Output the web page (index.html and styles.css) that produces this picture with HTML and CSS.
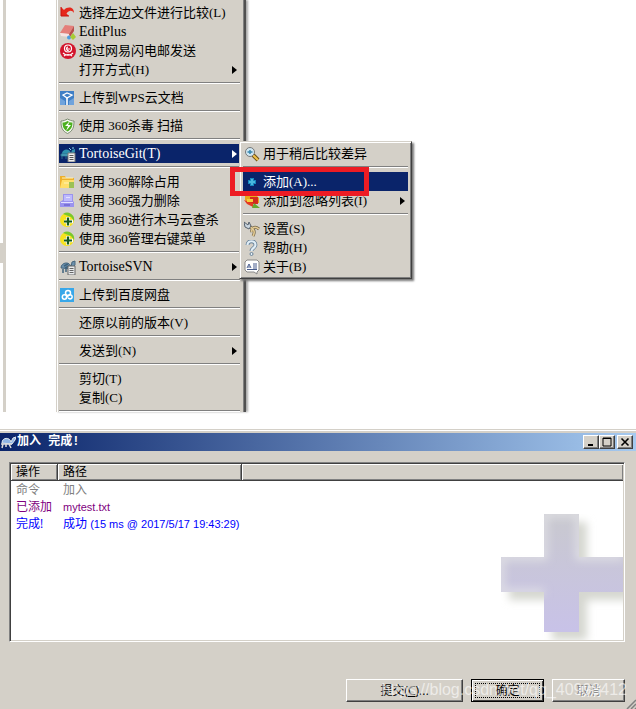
FILE: index.html
```html
<!DOCTYPE html>
<html lang="zh-CN">
<head>
    <meta charset="UTF-8">
    <meta name="viewport" content="width=device-width, initial-scale=1.0">
    <title>加入 完成!</title>
    <link rel="stylesheet" href="styles.css">
</head>

<body>
    <main class="desktop">
        <div class="splitter"><span class="thumb"></span></div>

        <ul class="menu">
            <li><button class="item">
                <svg class="icon" viewBox="0 0 16 16"><path d="M1 2v9h8L6.500 8.500C9 5 12 5 14 8c0-6-6-7-10-3z" fill="#e5281c"/><path d="M1 2v9h8" fill="none" stroke="#c5150f"/></svg>
                <span>选择左边文件进行比较(L)</span>
            </button></li>
            <li><button class="item">
                <svg class="icon" viewBox="0 0 16 16"><path d="M5 1l9 1-5 8-9-1z" fill="#e47f7a"/><path d="M0 9l9 1 1 3-9-1z" fill="#f6e4e4"/><path d="M9 10l5-8v5l-4 6z" fill="#b94d4b"/><circle cx="9" cy="13.500" r="2" fill="#4c9be0"/><path d="M13 9l3 4-3 3-3-3z" fill="#a8cc35"/></svg>
                <span class="latin">EditPlus</span>
            </button></li>
            <li><button class="item">
                <svg class="icon" viewBox="0 0 16 16"><circle cx="8" cy="8" r="8" fill="#d3152c"/><circle cx="8" cy="5.500" r="3.500" fill="none" stroke="#fff" stroke-width="1.200"/><path d="M6 6h4M8 4c-2 0-2 4 1 4M3 10c3 3 7 3 10 0M4 13c2-2 6-2 8 0" fill="none" stroke="#fff" stroke-width="1.200"/></svg>
                <span>通过网易闪电邮发送</span>
            </button></li>
            <li><button class="item has-sub">
                <span class="icon"></span>
                <span>打开方式(H)</span>
            </button></li>
            <li class="separator"></li>
            <li><button class="item">
                <svg class="icon" viewBox="0 0 16 16"><path d="M0 1h14v14H0z" fill="#3f7fc6"/><path d="M3 5l4-2 5 2-5 3z" fill="#3f7fc6" stroke="#fff" stroke-width="1.300"/><path d="M7 8v7" stroke="#fff" stroke-width="1.600"/><path d="M0 8l5 3v4H0zM9 11l5-3v7H9z" fill="#6fa3dc"/></svg>
                <span>上传到WPS云文档</span>
            </button></li>
            <li class="separator"></li>
            <li><button class="item">
                <svg class="icon" viewBox="0 0 16 16"><path d="M7.500 1c2 1 4 2 6.500 2 0 6-1 10-6.500 12.500C2 13 1 9 1 3c2.500 0 4.500-1 6.500-2z" fill="#f4f8f0" stroke="#7c8c72"/><path d="M7.500 3c2 1 3 1.500 5 1.500 0 4-1 7-5 9-4-2-5-5-5-9 2 0 3-.5 5-1.500z" fill="#4cb01f"/><path d="M10 3L5 8h3l-2 5 5-6H8z" fill="#fff"/></svg>
                <span>使用 360杀毒 扫描</span>
            </button></li>
            <li class="separator"></li>
            <li class="parent">
                <button class="item has-sub selected">
                    <svg class="icon" viewBox="0 0 16 16"><path d="M2 7c1-4 7-5 9 0l1-3 3-1v3l-3 2H2z" fill="#2e91ad"/><path d="M1 8h9v2H1zM2 10v3M6 10v3" fill="#5ac2d6" stroke="#2b6c8c"/><path d="M8 7h7v9H8z" fill="#eee" stroke="#777"/><path d="M9.500 9.500h4M9.500 11.500h4M9.500 13.500h4" stroke="#555"/><path d="M9 2l2 2M13 1v2" stroke="#87d9ef"/></svg>
                    <span class="latin">TortoiseGit(T)</span>
                </button>

                <ul class="menu submenu">
                    <li><button class="item">
                        <svg class="icon" viewBox="0 0 16 16"><path d="M9 9l5 5" stroke="#6b4d12" stroke-width="4"/><path d="M9 9l5 5" stroke="#efc24b" stroke-width="2"/><circle cx="6" cy="6" r="4.500" fill="#cfe7f3" stroke="#777"/><path d="M3.500 6h5M6 4v4" stroke="#3785ad" stroke-width="1.500"/></svg>
                        <span>用于稍后比较差异</span>
                    </button></li>
                    <li class="separator"></li>
                    <li class="parent">
                        <button class="item selected">
                            <svg class="icon" viewBox="0 0 16 16"><path d="M6 4h4v2h2v4h-2v2H6v-2H4V6h2z" fill="#1786bd"/><path d="M7 5h2v2h2v2H9v2H7V9H5V7h2z" fill="#48b9df"/></svg>
                            <span>添加(A)...</span>
                        </button>
                        <span class="marker"></span>
                    </li>
                    <li><button class="item has-sub">
                        <svg class="icon" viewBox="0 0 16 16"><path d="M1 2h11l3 3v5H5L1 7z" fill="#e7a91a"/><path d="M6 4h8v7H6z" fill="#d32a1d"/><path d="M0 7l9 3v4L3 11z" fill="#e43b21"/><path d="M3 6h6v3H3z" fill="#f6cf3a"/><path d="M10 10l6 5H8z" fill="#67a82d"/></svg>
                        <span>添加到忽略列表(I)</span>
                    </button></li>
                    <li class="separator"></li>
                    <li><button class="item">
                        <svg class="icon" viewBox="0 0 16 16"><path d="M4 5c5 2 8 5 5 10M15 8c-5-4-8 0-7 3" fill="none" stroke="#756647" stroke-width="3"/><path d="M4 5c5 2 8 5 5 10M15 8c-5-4-8 0-7 3" fill="none" stroke="#e4cb94" stroke-width="1.600"/><path d="M0 1l1 5 4 2 2-3-2-4-1 3z" fill="#c9d5df" stroke="#56616d"/></svg>
                        <span>设置(S)</span>
                    </button></li>
                    <li><button class="item">
                        <svg class="icon" viewBox="0 0 16 16"><path d="M3.500 5c0-5 8-5 8 0 0 3-4 3-4 6" fill="none" stroke="#688299" stroke-width="3.800"/><path d="M3.500 5c0-5 8-5 8 0 0 3-4 3-4 6" fill="none" stroke="#e1eef7" stroke-width="2.200"/><circle cx="7.500" cy="14" r="1.500" fill="#e9f3f9" stroke="#688299"/></svg>
                        <span>帮助(H)</span>
                    </button></li>
                    <li><button class="item">
                        <svg class="icon" viewBox="0 0 16 16"><path d="M3 1h10l2 2v8l-2 2v2l-3-2H3l-2-2V3z" fill="#fff" stroke="#888"/><path d="M3 9l2-4 2 4M4 8h2M9 5h4M9 7h4M3 10.500h10M9 9h4" fill="none" stroke="#465b8d"/></svg>
                        <span>关于(B)</span>
                    </button></li>
                </ul>
            </li>
            <li class="separator"></li>
            <li><button class="item">
                <svg class="icon" viewBox="0 0 16 16"><path d="M0 2h5l1 2h8v10H0z" fill="#eeb02c"/><path d="M2 6h12v8H0z" fill="#ffdf6a"/><path d="M2 4h11M4 9h5" stroke="#fff4b9"/><path d="M9 8h5v6H9z" fill="#9cc154"/></svg>
                <span>使用 360解除占用</span>
            </button></li>
            <li><button class="item">
                <svg class="icon" viewBox="0 0 16 16"><path d="M3 1h10v7l1 1v5H0V9l3-2z" fill="#9a93ee"/><path d="M4 2h8v6H4z" fill="#bdbafc"/><path d="M1 9.500h12M6 4.500h4" stroke="#e3e1ff"/><path d="M4 11h6v2H4z" fill="#7a72d8"/></svg>
                <span>使用 360强力删除</span>
            </button></li>
            <li><button class="item">
                <svg class="icon" viewBox="0 0 16 16"><circle cx="7" cy="8" r="7" fill="#f5e21e"/><path d="M3 2a7 7 0 0 1 11 7l-3-4z" fill="#79c82b"/><path d="M8 5v9M4 9.500h9" stroke="#fff" stroke-width="3.500"/><path d="M8 5.500v8M4 9.500h8" stroke="#145c22" stroke-width="2.200"/></svg>
                <span>使用 360进行木马云查杀</span>
            </button></li>
            <li><button class="item">
                <svg class="icon" viewBox="0 0 16 16"><circle cx="7" cy="8" r="7" fill="#f5e21e"/><path d="M3 2a7 7 0 0 1 11 7l-3-4z" fill="#79c82b"/><path d="M8 5v9M4 9.500h9" stroke="#fff" stroke-width="3.500"/><path d="M8 5.500v8M4 9.500h8" stroke="#145c22" stroke-width="2.200"/></svg>
                <span>使用 360管理右键菜单</span>
            </button></li>
            <li class="separator"></li>
            <li><button class="item has-sub">
                <svg class="icon" viewBox="0 0 16 16"><path d="M1 9c0-6 9-7 10-1l1-5 3-1v4l-3 4z" fill="#6c91ad" stroke="#48667e"/><path d="M3 10v4M6 10v3M4 7l4-2M5 9l4-2" stroke="#3f627c" stroke-width="1.500"/><path d="M8 7h7v9H8z" fill="#e8eaec" stroke="#666"/><path d="M9.500 9.500h4M9.500 11.500h4M9.500 13.500h4" stroke="#666"/></svg>
                <span class="latin">TortoiseSVN</span>
            </button></li>
            <li class="separator"></li>
            <li><button class="item">
                <svg class="icon" viewBox="0 0 16 16"><path d="M0 1h14v14H0z" fill="#38a7e9"/><circle cx="8" cy="6" r="2.500" fill="none" stroke="#fff" stroke-width="1.500"/><circle cx="4.500" cy="10" r="2.200" fill="none" stroke="#fff" stroke-width="1.500"/><path d="M6 11l3-3c4-1 4 4 1 4l-2-1" fill="none" stroke="#fff" stroke-width="1.500"/></svg>
                <span>上传到百度网盘</span>
            </button></li>
            <li class="separator"></li>
            <li><button class="item"><span class="icon"></span><span>还原以前的版本(V)</span></button></li>
            <li class="separator"></li>
            <li><button class="item has-sub"><span class="icon"></span><span>发送到(N)</span></button></li>
            <li class="separator"></li>
            <li><button class="item"><span class="icon"></span><span>剪切(T)</span></button></li>
            <li><button class="item"><span class="icon"></span><span>复制(C)</span></button></li>
            <li class="separator"></li>
        </ul>
    </main>

    <section class="dialog">
        <header class="titlebar">
            <svg class="icon" viewBox="0 0 16 16"><path d="M2 9c0-6 8-6 9-1l2-4 3-1-1 3-3 4z" fill="#8fb5e5" stroke="#e1e8ee"/><path d="M1 10h11M3 10l-1 4M6 10v3M9 10l2 4" stroke="#ddd" stroke-width="1.500"/></svg>
            <h1>加入 完成!</h1>
            <div class="controls">
                <button class="control" aria-label="最小化"><svg viewBox="0 0 10 10"><path d="M2 8h5" stroke="#000" stroke-width="2"/></svg></button>
                <button class="control" aria-label="最大化"><svg viewBox="0 0 10 10"><path d="M1 1h8v8H1zM1 1.500h8" fill="none" stroke="#000"/></svg></button>
                <button class="control close" aria-label="关闭"><svg viewBox="0 0 10 10"><path d="M1.500 1.500l7 7M8.500 1.500l-7 7" stroke="#000" stroke-width="1.600"/></svg></button>
            </div>
        </header>

        <div class="list">
            <table>
                <thead>
                    <tr><th class="action">操作</th><th class="path">路径</th><th></th></tr>
                </thead>
                <tbody>
                    <tr class="command"><td>命令</td><td>加入</td><td></td></tr>
                    <tr class="added"><td>已添加</td><td><span class="value">mytest.txt</span></td><td></td></tr>
                    <tr class="done"><td>完成!</td><td>成功 <span class="value">(15 ms @ 2017/5/17 19:43:29)</span></td><td></td></tr>
                </tbody>
            </table>
            <svg class="plus" viewBox="0 0 122 126">
                <defs>
                    <linearGradient id="plus-fill" x1="0" y1="0" x2="0" y2="1">
                        <stop offset="0" stop-color="#c9c9cf"/>
                        <stop offset="1" stop-color="#c8c2e8"/>
                    </linearGradient>
                    <filter id="soft"><feGaussianBlur stdDeviation="4"/></filter>
                    <clipPath id="plus-clip"><path d="M43 0h35v43h44v35H78v40H43V78H0V43h43z"/></clipPath>
                </defs>
                <path d="M51 8h35v43h44v35H86v40H51V86H8V51h43z" fill="#d5d7d0" filter="url(#soft)"/>
                <path d="M43 0h35v43h44v35H78v40H43V78H0V43h43z" fill="url(#plus-fill)"/>
                <g clip-path="url(#plus-clip)"><path d="M43 78H0V43h43V0h35v43h44" fill="none" stroke="#e2e2e6" stroke-width="6" filter="url(#soft)"/></g>
            </svg>
        </div>

        <footer class="actions">
            <button class="push wide">提交(<u>C</u>)...</button>
            <button class="push default">确定</button>
            <button class="push" disabled>取消</button>
            <span class="watermark">https://blog.csdn.net/qq_40998412</span>
            <svg class="grip" viewBox="0 0 10 10"><path d="M1 10l9-9M5 10l5-5M9 10l1-1" stroke="#808080" stroke-width="1.500"/></svg>
        </footer>
    </section>
</body>
</html>
```
FILE: styles.css
```css
* {
    box-sizing: border-box;
}

body {
    margin: 0;
    background-color: #fff;
    color: #000;
    font-family: "Liberation Serif", "Noto Sans CJK SC", serif;
    font-size: 13px;
}

button {
    font: inherit;
    color: inherit;
}

/* Context menu */
.desktop {
    display: flex;
    gap: 50px;
    margin-bottom: 17px;
}

.splitter {
    display: flex;
    align-items: center;
    width: 6px;
    padding-top: 93px;
    border-right: 3px solid #d4d0c8;
}

.thumb {
    flex: 1;
    height: 20px;
    background-color: #d4d0c8;
}

.menu {
    width: 190px;
    margin: 0;
    padding: 3px 4px 0 2px;
    list-style: none;
    background-color: #d4d0c8;
    border-left: 1px solid #d4d0c8;
    border-right: 2px solid #505050;
    box-shadow: inset 1px 0 #fff, inset -1px 0 #808080, 2px 0 2px #aaa;
}

.item {
    display: flex;
    align-items: center;
    gap: 3px;
    width: 100%;
    height: 19px;
    padding: 0 3px 0 1px;
    border: none;
    background: none;
    line-height: 19px;
    text-align: left;
    white-space: nowrap;
}

.icon {
    flex: none;
    width: 16px;
    height: 16px;
}

.latin {
    font-size: 14px;
}

.has-sub::after {
    content: "";
    margin-left: auto;
    border: 4px solid transparent;
    border-left: 5px solid currentColor;
    border-right: none;
}

.selected {
    background-color: #0a246a;
    color: #fff;
}

.separator {
    height: 2px;
    margin: 3px 0 4px;
    border-top: 1px solid #808080;
    border-bottom: 1px solid #fff;
}

.separator:last-child {
    margin-bottom: 0;
}

.parent {
    position: relative;
}

.submenu {
    position: absolute;
    z-index: 1;
    top: -3px;
    left: 180px;
    width: 173px;
    padding: 2px 3px;
    border: 1px solid #d4d0c8;
    border-right-color: #404040;
    border-bottom-color: #404040;
    box-shadow: inset 1px 1px #fff, inset -1px -1px #808080, 2px 2px 2px #777;
}

.marker {
    position: absolute;
    z-index: 2;
    top: -5px;
    left: -13px;
    width: 139px;
    height: 29px;
    border: 5px solid #ed1c24;
}

/* Progress dialog */
.dialog {
    padding: 1px 0;
    background-color: #d4d0c8;
    border-top: 1px solid #d4d0c8;
    box-shadow: inset 0 1px #fff;
    font-family: "Open Sans", "Noto Sans CJK SC", sans-serif;
    font-size: 12px;
}

.titlebar {
    display: flex;
    align-items: center;
    height: 18px;
    margin-top: 2px;
    padding-right: 3px;
    background: linear-gradient(to right, #0a246a, #a6caf0);
    color: #fff;
}

.titlebar h1 {
    margin: 0 0 0 1px;
    font-family: "Liberation Mono", "Noto Sans CJK SC", monospace;
    font-size: 12px;
    line-height: 18px;
}

.controls {
    display: flex;
    margin-left: auto;
}

.control {
    display: flex;
    justify-content: center;
    width: 16px;
    height: 14px;
    padding: 1px;
    border: 1px solid;
    border-color: #fff #404040 #404040 #fff;
    background-color: #d4d0c8;
    box-shadow: inset -1px -1px #808080;
}

.control svg {
    width: 10px;
    height: 10px;
}

.close {
    margin-left: 2px;
}

.list {
    display: flex;
    flex-direction: column;
    margin: 11px 11px 0 9px;
    padding: 1px;
    border: 1px solid;
    border-color: #808080 #fff #fff #808080;
    background-color: #fff;
    box-shadow: inset 1px 1px #404040, inset -1px -1px #d4d0c8;
}

.list table {
    width: 100%;
    border-collapse: separate;
    border-spacing: 0;
    table-layout: fixed;
}

.list th {
    height: 17px;
    padding: 0 5px;
    background-color: #d4d0c8;
    border-right: 1px solid #404040;
    border-bottom: 1px solid #404040;
    box-shadow: inset 1px 1px #fff, inset -1px -1px #808080;
    font-weight: normal;
    line-height: 16px;
    text-align: left;
}

.list th:last-child {
    border-right: none;
}

.list .action {
    width: 47px;
}

.list .path {
    width: 184px;
}

.list td {
    height: 17px;
    padding: 0 5px;
    line-height: 16px;
    white-space: nowrap;
}

.value {
    font-family: "Liberation Sans", sans-serif;
    font-size: 11px;
}

.command {
    color: #808080;
}

.added {
    color: #800080;
}

.done {
    color: #0000ff;
}

.plus {
    align-self: flex-end;
    width: 122px;
    height: 126px;
    margin-top: -18px;
}

.actions {
    position: relative;
    display: flex;
    justify-content: flex-end;
    gap: 8px;
    margin-top: 37px;
    padding: 0 11px 7px;
}

.push {
    width: 73px;
    height: 23px;
    padding: 0;
    border: 1px solid;
    border-color: #fff #404040 #404040 #fff;
    background-color: #d4d0c8;
    box-shadow: inset -1px -1px #808080;
    line-height: 19px;
}

.push:disabled {
    color: #808080;
    text-shadow: 1px 1px #fff;
}

.wide {
    width: 117px;
}

.default {
    border-color: #000;
    box-shadow: inset 1px 1px #fff, inset -1px -1px #404040;
    outline: 1px dotted #000;
    outline-offset: -5px;
}

.watermark {
    position: absolute;
    right: 9px;
    top: 1px;
    color: rgba(255, 255, 255, 0.6);
    font-family: "Liberation Sans", sans-serif;
    font-size: 16px;
    line-height: 20px;
    pointer-events: none;
}

.grip {
    position: absolute;
    right: 0;
    bottom: 0;
    width: 10px;
    height: 10px;
}
```
